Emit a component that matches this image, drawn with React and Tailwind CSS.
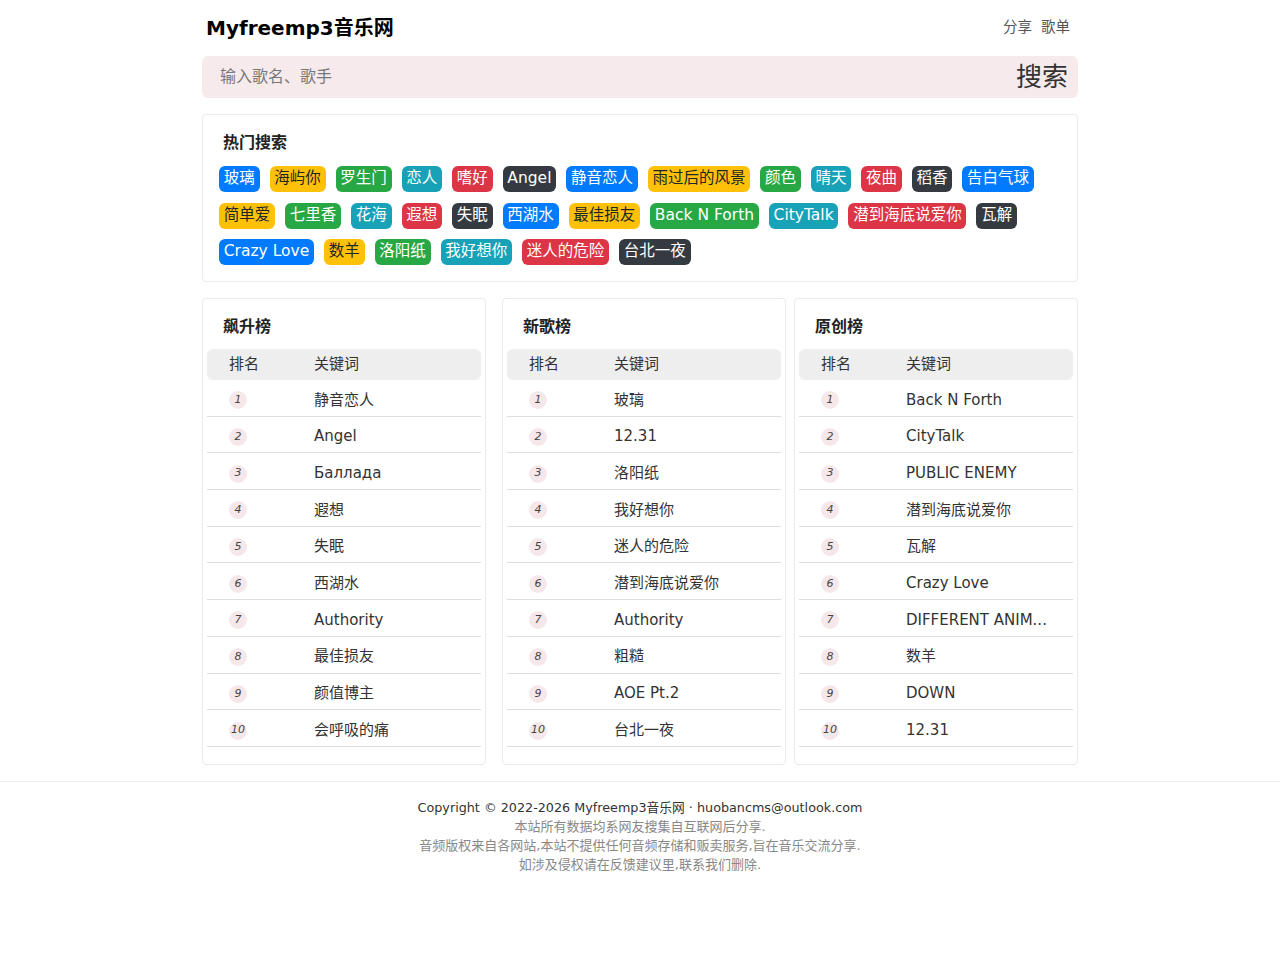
import React from "react";

const hot = [
  ["玻璃", "p"], ["海屿你", "w"], ["罗生门", "s"], ["恋人", "i"], ["嗜好", "d"], ["Angel", "k"], ["静音恋人", "p"],
  ["雨过后的风景", "w"], ["颜色", "s"], ["晴天", "i"], ["夜曲", "d"], ["稻香", "k"], ["告白气球", "p"],
  ["简单爱", "w"], ["七里香", "s"], ["花海", "i"], ["遐想", "d"], ["失眠", "k"], ["西湖水", "p"],
  ["最佳损友", "w"], ["Back N Forth", "s"], ["CityTalk", "i"], ["潜到海底说爱你", "d"], ["瓦解", "k"],
  ["Crazy Love", "p"], ["数羊", "w"], ["洛阳纸", "s"], ["我好想你", "i"], ["迷人的危险", "d"], ["台北一夜", "k"],
];

const colorCls = {
  p: "bg-[#007bff] text-white",
  w: "bg-[#ffc107] text-[#212529]",
  s: "bg-[#28a745] text-white",
  i: "bg-[#17a2b8] text-white",
  d: "bg-[#dc3545] text-white",
  k: "bg-[#343a40] text-white",
};

const boards = [
  {
    title: "飙升榜",
    items: ["静音恋人", "Angel", "Баллада", "遐想", "失眠", "西湖水", "Authority", "最佳损友", "颜值博主", "会呼吸的痛"],
    cls: "",
  },
  {
    title: "新歌榜",
    items: ["玻璃", "12.31", "洛阳纸", "我好想你", "迷人的危险", "潜到海底说爱你", "Authority", "粗糙", "AOE Pt.2", "台北一夜"],
    cls: "ml-4",
  },
  {
    title: "原创榜",
    items: ["Back N Forth", "CityTalk", "PUBLIC ENEMY", "潜到海底说爱你", "瓦解", "Crazy Love", "DIFFERENT ANIM...", "数羊", "DOWN", "12.31"],
    cls: "ml-2",
  },
];

function Board({ title, items, cls }) {
  return (
    <div className={`w-[284px] border border-[#ebebeb] rounded-[4px] pt-[16px] pb-[17px] ${cls}`}>
      <div className="pl-[20px] text-[16px] leading-[24px] font-bold text-[#222] mb-[10px]">{title}</div>
      <div className="px-[4px]">
        <div className="flex items-center h-[31px] bg-[#eeeeee] rounded-[6px] text-[15px] text-[#333]">
          <div className="w-[107px] pl-[22px]">排名</div>
          <div>关键词</div>
        </div>
        {items.map((t, i) => (
          <div key={i} className="flex items-center h-[36.7px] pt-[4px] border-b border-[#dedede] text-[15px] text-[#333]">
            <div className="w-[107px] pl-[22px] pt-[1px]">
              <span className="flex items-center justify-center w-[18px] h-[18px] rounded-full bg-[#f6e8ea] text-[11px] italic text-[#444]">
                {i + 1}
              </span>
            </div>
            <div className="whitespace-nowrap">{t}</div>
          </div>
        ))}
      </div>
    </div>
  );
}

export default function App() {
  return (
    <div
      className="bg-white min-h-[960px]"
      style={{ fontFamily: '"DejaVu Sans", "Noto Sans CJK SC", sans-serif' }}
    >
      <div className="w-[876px] mx-auto">
        <div className="flex items-center justify-between h-[56px] pl-[4px] pr-[8px]">
          <div className="text-[20px] font-bold text-black">Myfreemp3音乐网</div>
          <div className="flex gap-[9px] text-[14.5px] text-[#555]">
            <span>分享</span>
            <span>歌单</span>
          </div>
        </div>
        <div className="flex items-center justify-between h-[42px] rounded-[6px] bg-[#f6eaec]">
          <span className="pl-[18px] text-[16px] text-[#777]">输入歌名、歌手</span>
          <span className="pr-[10px] text-[26px] text-[#333]">搜索</span>
        </div>
        <div className="mt-4 border border-[#ebebeb] rounded-[4px] pt-[16px] pb-[16px] pl-[16px] pr-[16px]">
          <div className="pl-[4px] text-[16px] leading-[24px] font-bold text-[#222] mb-[11px]">热门搜索</div>
          <div className="flex flex-wrap gap-x-[10px] gap-y-[10.5px]">
            {hot.map(([t, c], i) => (
              <span
                key={i}
                className={`inline-flex items-center h-[26px] px-[4.75px] rounded-[6px] text-[15.5px] whitespace-nowrap ${colorCls[c]}`}
              >
                {t}
              </span>
            ))}
          </div>
        </div>
        <div className="flex mt-4">
          {boards.map((b, i) => (
            <Board key={i} {...b} />
          ))}
        </div>
      </div>
      <div className="mt-4 border-t border-[#ececec] pt-[16px] text-center">
        <div className="text-[12.75px] leading-[19px] text-[#333]">
          Copyright © 2022-2026 Myfreemp3音乐网 · huobancms@outlook.com
        </div>
        <div className="text-[13px] leading-[19px] text-[#888]">本站所有数据均系网友搜集自互联网后分享.</div>
        <div className="text-[13px] leading-[19px] text-[#888]">
          音频版权来自各网站,本站不提供任何音频存储和贩卖服务,旨在音乐交流分享.
        </div>
        <div className="text-[13px] leading-[19px] text-[#888]">如涉及侵权请在反馈建议里,联系我们删除.</div>
      </div>
    </div>
  );
}
